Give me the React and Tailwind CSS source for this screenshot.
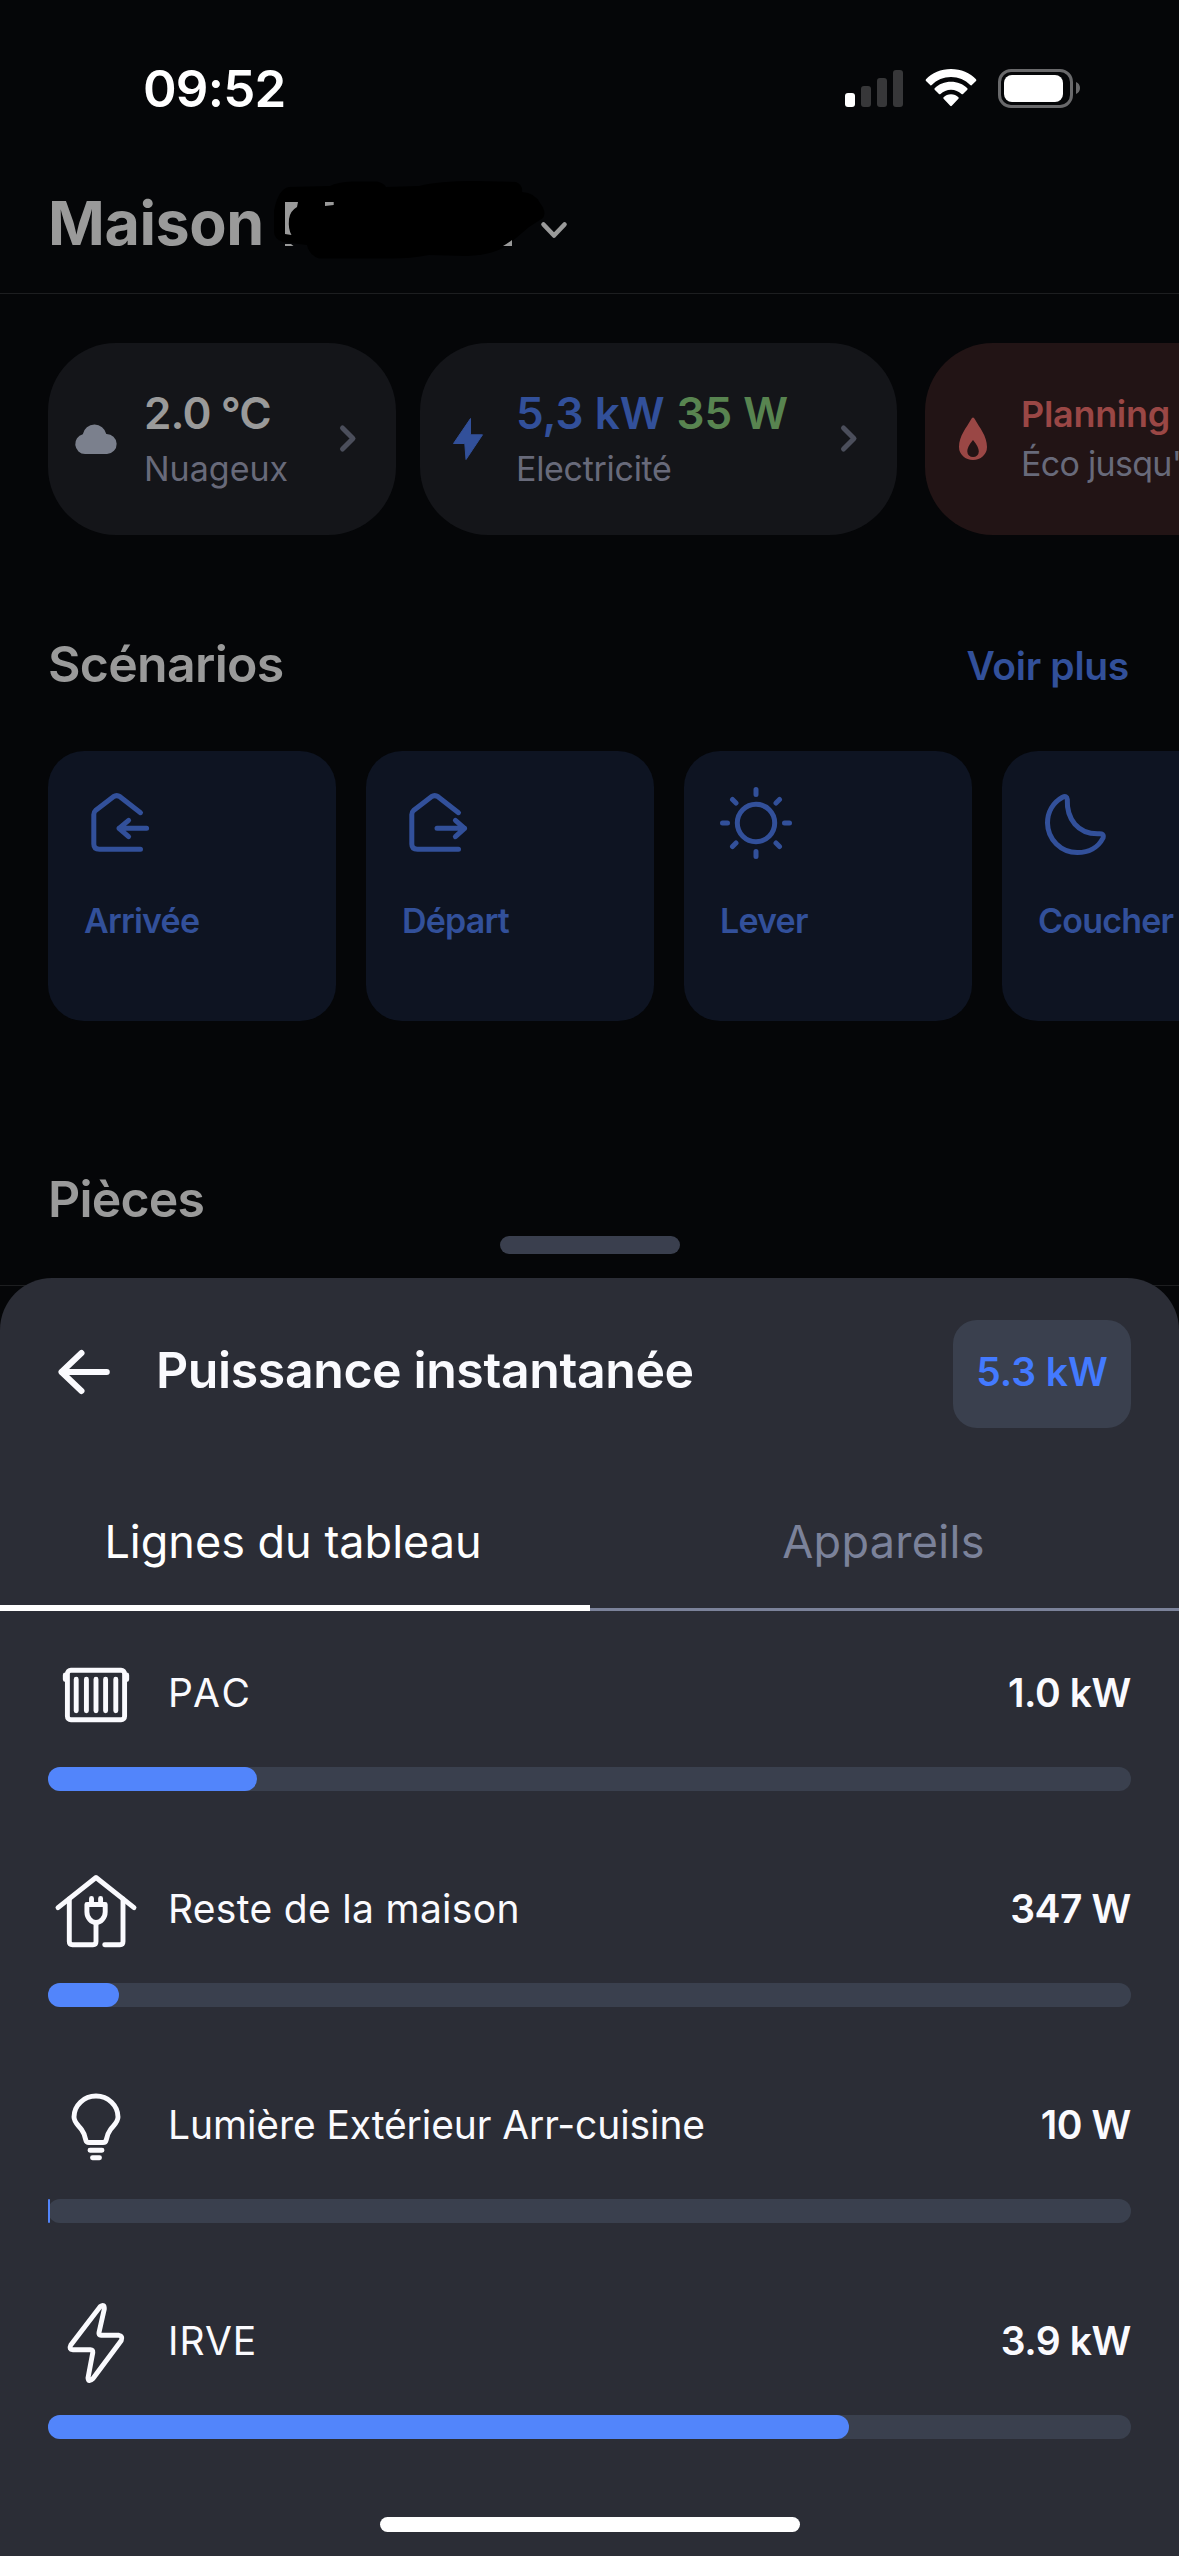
import React from "react";

function StatusBar() {
  return (
    <div className="flex h-44 items-center justify-between pl-[143px] pr-[98px] text-white">
      <span className="text-[51px] leading-none font-semibold tracking-[-0.8px]">09:52</span>
      <div className="flex items-center">
        {/* Signal */}
        <div className="flex h-[37px] items-end gap-1.5">
          <div className="h-3.5 w-2.5 rounded-[3px] bg-white" />
          <div className="h-[21px] w-2.5 rounded-[3px] bg-[#373739]" />
          <div className="h-[29px] w-2.5 rounded-[3px] bg-[#373739]" />
          <div className="h-[37px] w-2.5 rounded-[3px] bg-[#373739]" />
        </div>
        {/* Wifi */}
        <svg className="ml-[22px] h-[38px] w-[52px]" viewBox="0 0 52 38" fill="currentColor">
          <path d="M26 0C36 0 45.2 3.9 51 10.2Q51.8 11.2 51 12L46.6 16.2Q46 16.8 45.2 16C40.2 10.9 33.4 8 26 8S11.800 10.900 6.800 16Q6 16.800 5.400 16.200L1 12Q.2 11.200 1 10.200C6.800 3.900 16 0 26 0Z" />
          <path d="M26 12.800C32.300 12.800 38.100 15.200 42.300 19.200Q43 20 42.300 20.800L38 25Q37.300 25.600 36.500 25C33.700 22.300 30.100 20.700 26 20.700S18.300 22.300 15.500 25Q14.700 25.600 14 25L9.700 20.800Q9 20 9.700 19.200C13.900 15.200 19.700 12.800 26 12.800Z" />
          <path d="M26 25.300C28.900 25.300 31.500 26.400 33.400 28.200Q34.200 29 33.400 29.800L26.800 36.800Q26 37.600 25.200 36.800L18.600 29.800Q17.800 29 18.600 28.200C20.500 26.400 23.100 25.300 26 25.300Z" />
        </svg>
        {/* Battery */}
        <div className="ml-[21px] flex h-[39px] w-[75px] items-center rounded-[13px] border-[3px] border-[#69696b] pl-[3px]">
          <div className="h-[27px] w-[59px] rounded-[8px] bg-white" />
        </div>
        <svg className="ml-[3px] h-3 w-[5px]" viewBox="0 0 5 12" fill="#69696b">
          <path d="M0 0C2.500 1 4 3.300 4 6S2.500 11 0 12Z" />
        </svg>
      </div>
    </div>
  );
}

function Header() {
  return (
    <header className="flex h-[118px] items-center border-b border-[#1d1e20] pb-[23px] pl-12 text-[#9a9a9a]">
      <h1 className="text-[61px] leading-none font-bold tracking-[-0.4px]">Maison</h1>
      {/* Hidden home name */}
      <svg className="mt-[-9px] ml-[9px] h-[80px] w-[272px] shrink-0" viewBox="274 178 272 80">
        <path
          d="M275 210Q279 188 290 186L331 185Q338 181 354 180.500L378 180.500Q385 182 387 186L420 185Q440 180 475 180L517 181Q524 184 523 191Q536 192 541 202Q548 211 544 217L530 226L510 243Q496 254 468 255L430 254Q410 258 385 257.500L320 257.500Q310 254 308 244L284 241Q275 238 275 231Z"
          fill="#000"
        />
        <path d="M286 201H299L298 206Q291 210 290 218Q289 228 292.500 234L286 233Z" fill="currentColor" />
        <path d="M286 243H292L294.500 245H286ZM326 201H334.700V204L326 205ZM504 245Q509 242 513 239V245Z" fill="currentColor" />
      </svg>
      <svg
        className="-ml-2 mt-3.5 h-[24px] w-[32px]"
        viewBox="0 0 32 24"
        fill="none"
        stroke="currentColor"
        strokeWidth="4.600"
        strokeLinecap="round"
        strokeLinejoin="round"
      >
        <path d="M6.500 6.500L17 17.500L27.500 6.500" />
      </svg>
    </header>
  );
}

function ChevronRight() {
  return (
    <svg className="h-12 w-12" viewBox="0 0 48 48" fill="none" stroke="#4b4e5b" strokeWidth="5" strokeLinecap="round" strokeLinejoin="round">
      <path d="M18.500 13L29 23.500L18.500 34" />
    </svg>
  );
}

function InfoCards() {
  return (
    <div className="mt-[49px] flex gap-6 overflow-hidden pl-12">
      <div className="flex h-48 w-[348px] shrink-0 items-center rounded-[68px] bg-[#141519] px-6">
        <svg className="h-12 w-12" viewBox="0 0 48 48" fill="#7b808d">
          <path d="M13 39A10 10 0 0 1 10.800 19.300A12 12 0 0 1 34.300 19A10 10 0 0 1 35 39Z" />
        </svg>
        <div className="mt-1 ml-6 flex-1 leading-[56px]">
          <p className="text-[44px] font-semibold tracking-[-0.9px] text-[#9a9a9a]">2.0 °C</p>
          <p className="text-[34px] text-[#686a7a]">Nuageux</p>
        </div>
        <ChevronRight />
      </div>
      <div className="flex h-48 w-[477px] shrink-0 items-center rounded-[68px] bg-[#141519] px-6">
        <svg className="h-12 w-12" viewBox="0 0 48 48" fill="#32509a" stroke="#32509a" strokeLinejoin="round">
          <path d="M26.500 3.500L9.500 28.500H20.800L22 44.500L38.500 19.800H26.500Z" />
        </svg>
        <div className="mt-1 ml-6 flex-1 leading-[56px]">
          <p className="flex gap-3 text-[44px] font-semibold text-[#32509a]">
            <span>5,3 kW</span>
            <span className="text-[#588450]">35 W</span>
          </p>
          <p className="text-[34px] tracking-[-0.3px] text-[#686a7a]">Electricité</p>
        </div>
        <ChevronRight />
      </div>
      <div className="ml-1 flex h-48 w-[480px] shrink-0 items-center rounded-[68px] bg-[#221415] px-6">
        <svg className="h-12 w-12" viewBox="0 0 48 48" fill="#9a4745" fillRule="evenodd">
          <path d="M24 2.600Q25 2.600 26 4.500C30.500 12.500 38 21 38 32A14 13 0 0 1 10 32C10 21 17.500 12.500 22 4.500Q23 2.600 24 2.600ZM24 25C22 27.500 18.300 32 18.300 36.500A5.700 5.500 0 0 0 29.800 36.500C29.800 32 26 27.500 24 25Z" />
        </svg>
        <div className="ml-6 whitespace-nowrap leading-[50px]">
          <p className="text-[36px] font-semibold tracking-[-0.3px] text-[#9a4745]">Planning</p>
          <p className="text-[34px] tracking-[-0.7px] text-[#686a7a]">Éco jusqu'</p>
        </div>
      </div>
    </div>
  );
}

const scenarios = [
  {
    name: "Arrivée",
    icon: (
      <>
        <path d="M56.500 25.700L36 9.700Q32.700 7.500 29.400 9.700L11.500 23.500Q9.800 25 9.800 27.500V57Q9.800 62.300 15.500 62.300H56.500" />
        <path d="M62.600 41.300H35M44.600 33.300L35 41.300L44.600 49.700" />
      </>
    ),
  },
  {
    name: "Départ",
    icon: (
      <>
        <path d="M56.500 25.700L36 9.700Q32.700 7.500 29.400 9.700L11.500 23.500Q9.800 25 9.800 27.500V57Q9.800 62.300 15.500 62.300H56.500" />
        <path d="M35 41.300H62.600M53.400 33.300L62.600 41.300L53.400 49.700" />
      </>
    ),
  },
  {
    name: "Lever",
    icon: (
      <>
        <circle cx="36" cy="36" r="18.700" />
        <path d="M36 2.500V7.500M36 64.500V69.500M2.500 36H7.500M64.500 36H69.500M12.500 12.500L16 16M56 56L59.500 59.500M12.500 59.500L16 56M56 16L59.500 12.500" />
      </>
    ),
  },
  {
    name: "Coucher",
    icon: (
      <path d="M24.500 10.200Q28.800 8 29.300 12.500C28.500 32 40 47 60 46.800Q66.500 46 65 51C60 61 50 65.500 39.500 65.500A29.800 29.800 0 0 1 9.500 36C9.500 25 15 15.500 24.500 10.200Z" />
    ),
  },
];

function Scenarios() {
  return (
    <section>
      <div className="mt-[94px] flex h-[71px] items-center justify-between pr-[50px] pl-12">
        <h2 className="text-[50px] font-semibold tracking-[-0.7px] text-[#9a9a9a]">Scénarios</h2>
        <a className="mt-1 text-[39px] font-semibold tracking-[-0.3px] text-[#32509a]">Voir plus</a>
      </div>
      <div className="mt-[51px] flex gap-[30px] overflow-hidden pl-12">
        {scenarios.map((s) => (
          <div key={s.name} className="h-[270px] w-[288px] shrink-0 rounded-[36px] bg-[#0e1422] p-9 text-[#32509a]">
            <svg
              className="h-[72px] w-[72px]"
              viewBox="0 0 72 72"
              fill="none"
              stroke="currentColor"
              strokeWidth="5"
              strokeLinecap="round"
              strokeLinejoin="round"
            >
              {s.icon}
            </svg>
            <p className="mt-[38px] text-[34px] leading-[48px] font-semibold tracking-[-0.8px]">{s.name}</p>
          </div>
        ))}
      </div>
    </section>
  );
}

const lines = [
  {
    name: "PAC",
    nameClass: "tracking-[3px]",
    value: "1.0 kW",
    percent: 19.3,
    icon: (
      <>
        <rect x="19.400" y="23.300" width="57.200" height="49.400" rx="3.500" />
        <path d="M17.300 28V32.500M78.700 28V32.500" />
        <path d="M28.200 32.300V63.700M38.400 32.300V63.700M48 32.300V63.700M57.600 32.300V63.700M67.800 32.300V63.700" />
      </>
    ),
  },
  {
    name: "Reste de la maison",
    nameClass: "tracking-[0.3px]",
    value: "347 W",
    percent: 6.56,
    icon: (
      <>
        <path d="M10 44.700L48 14.500L86 44.700" />
        <path d="M21.300 36V78.500Q21.300 81.700 24.500 81.700H45Q48 81.700 48 78.500V60M75 36V78.500Q75 81.700 72 81.700H56.700" />
        <path d="M38.900 41.500H57.200V49C57.200 55 52.500 59.500 48 59.500S38.900 55 38.900 49ZM43.500 35.500V41M52.600 35.500V41" />
      </>
    ),
  },
  {
    name: "Lumière Extérieur Arr-cuisine",
    nameClass: "tracking-[-0.1px]",
    value: "10 W",
    percent: 0.18,
    icon: (
      <>
        <path d="M41 63.500Q38.300 63.500 37.800 61C37 56.500 35.800 53.500 33.500 50.500C29.500 45.500 26 43 26 38A22 21 0 0 1 70 38C70 43 66.500 45.500 62.500 50.500C60.200 53.500 59 56.500 58.200 61Q57.700 63.500 55 63.500Z" />
        <path d="M42 71.300H54M44.500 78.700H51.500" />
      </>
    ),
  },
  {
    name: "IRVE",
    nameClass: "tracking-[1px]",
    value: "3.9 kW",
    percent: 73.96,
    icon: (
      <path d="M52.300 11.500Q56.500 8.500 56.300 14L51 37.500Q50.500 40.300 53 40.300H71Q75 41 73.300 45.500L45 83.500Q40.500 88 40 83L44.800 57.500Q45 54.700 42.500 54.700H25Q20.500 54.500 22.800 50Z" />
    ),
  },
];

function PowerSheet() {
  return (
    <div className="absolute inset-x-0 bottom-0 flex h-[1320px] flex-col">
      <div className="h-[18px] w-[180px] shrink-0 self-center rounded-full bg-[#3a3f4e]" />
      <div className="mt-6 flex-1 rounded-t-[52px] bg-[#2b2d36] pt-[42px] text-[#fafafe]">
        {/* Title */}
        <div className="flex h-[108px] items-center px-12">
          <svg
            className="-mt-1 h-[72px] w-[72px]"
            viewBox="0 0 72 72"
            fill="none"
            stroke="currentColor"
            strokeWidth="6"
            strokeLinecap="round"
            strokeLinejoin="round"
          >
            <path d="M58.800 36H13.500M33.500 17L13.500 36L33.500 55" />
          </svg>
          <h2 className="-mt-2 ml-[36px] flex-1 text-[50px] font-semibold tracking-[-0.4px]">Puissance instantanée</h2>
          <div className="flex h-[108px] w-[178px] items-center justify-center rounded-3xl bg-[#3a404e] pb-1 text-[39px] font-semibold text-[#437aff]">
            5.3 kW
          </div>
        </div>

        {/* Tabs */}
        <div className="mt-[47px] flex h-[136px] text-[45px]">
          <button className="w-[590px] border-b-[6px] border-white pt-1 pr-1 text-white">Lignes du tableau</button>
          <button className="flex-1 border-b-[3px] border-[#7b829a] pr-0.5 tracking-[0.3px] text-[#7b829a]">Appareils</button>
        </div>

        {/* Lines */}
        <div className="mt-9 flex flex-col gap-[72px] px-12">
          {lines.map((line) => (
            <div key={line.name}>
              <div className="flex h-24 items-center text-[39px]">
                <svg
                  className="h-24 w-24"
                  viewBox="0 0 96 96"
                  fill="none"
                  stroke="currentColor"
                  strokeWidth="4.900"
                  strokeLinecap="round"
                  strokeLinejoin="round"
                >
                  {line.icon}
                </svg>
                <span className={`-mt-1 ml-6 flex-1 ${line.nameClass}`}>{line.name}</span>
                <span className="-mt-1 font-semibold tracking-[-0.4px]">{line.value}</span>
              </div>
              <div className="mt-6 h-6 rounded-xl bg-[#3a404e]">
                <div className="h-6 rounded-xl bg-[#5285fb]" style={{ width: `${line.percent}%` }} />
              </div>
            </div>
          ))}
        </div>

        {/* Home indicator */}
        <div className="mx-auto mt-[78px] h-[15px] w-[420px] rounded-full bg-white" />
      </div>
    </div>
  );
}

function App() {
  return (
    <div className="relative h-[2556px] w-[1179px] overflow-hidden bg-[#050608] font-['Inter',sans-serif]">
      <StatusBar />
      <Header />
      <InfoCards />
      <Scenarios />
      <h2 className="mt-[142px] pl-12 text-[50px] leading-[72px] font-semibold tracking-[-0.8px] text-[#9a9a9a]">Pièces</h2>
      <div className="mt-[50px] border-t border-[#1d1e20]" />
      <PowerSheet />
    </div>
  );
}

export default App;
